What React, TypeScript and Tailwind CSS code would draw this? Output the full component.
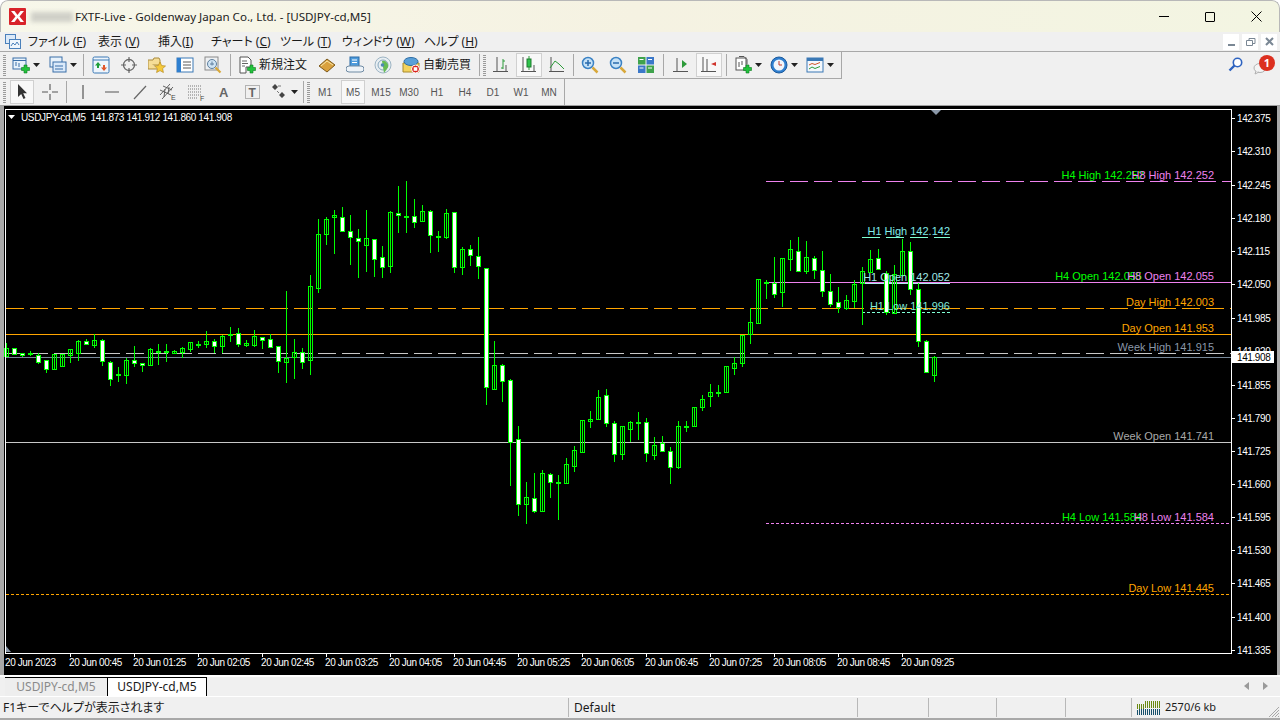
import React from 'react'

type Candle = [number, number, number, number, 0 | 1] // high, low, body top, body bottom, 1 = white body

const candles: Candle[] = [
  [343, 357, 348, 356, 0], [348, 354, 348, 354, 1], [353, 357, 353, 355, 1], [351, 356, 353, 354, 0],
  [353, 364, 355, 362, 1], [360, 373, 360, 369, 1], [354, 369, 354, 369, 0], [354, 366, 354, 366, 0],
  [349, 363, 349, 355, 0], [340, 361, 341, 353, 0], [339, 345, 341, 344, 1], [334, 348, 340, 345, 0],
  [339, 366, 340, 361, 1], [361, 386, 362, 379, 1], [367, 382, 374, 375, 0], [358, 384, 360, 375, 0],
  [346, 367, 360, 363, 1], [363, 372, 363, 365, 1], [348, 365, 349, 365, 0], [344, 365, 351, 352, 0],
  [344, 362, 351, 352, 0], [350, 354, 351, 353, 0], [347, 358, 348, 352, 0], [342, 352, 342, 349, 0],
  [341, 348, 344, 345, 0], [331, 348, 341, 344, 0], [339, 353, 341, 346, 1], [335, 353, 336, 346, 0],
  [327, 342, 334, 335, 0], [328, 347, 333, 344, 1], [340, 347, 343, 345, 0], [330, 347, 336, 345, 0],
  [337, 349, 337, 340, 1], [334, 347, 339, 347, 1], [346, 373, 346, 361, 1], [291, 383, 358, 362, 0],
  [339, 379, 352, 357, 0], [348, 369, 352, 362, 1], [275, 375, 286, 360, 0], [219, 293, 234, 288, 0],
  [217, 245, 219, 234, 0], [210, 254, 215, 217, 0], [207, 231, 217, 231, 1], [215, 265, 231, 237, 1],
  [229, 278, 238, 241, 1], [210, 272, 238, 245, 0], [239, 277, 239, 259, 1], [246, 278, 257, 267, 1],
  [211, 273, 212, 266, 0], [186, 233, 213, 215, 1], [181, 233, 216, 217, 0], [199, 228, 216, 222, 1],
  [205, 222, 211, 221, 0], [210, 253, 211, 235, 1], [231, 252, 236, 237, 0], [209, 239, 213, 237, 0],
  [212, 273, 212, 267, 1], [247, 275, 249, 267, 0], [245, 266, 249, 255, 1], [237, 279, 256, 266, 1],
  [268, 405, 268, 387, 1], [341, 389, 365, 389, 0], [364, 402, 365, 381, 1], [379, 486, 380, 442, 1],
  [426, 516, 439, 504, 1], [482, 524, 497, 504, 0], [473, 513, 498, 511, 1], [470, 511, 473, 511, 0],
  [473, 498, 474, 482, 1], [475, 520, 482, 483, 0], [458, 483, 464, 483, 0], [446, 472, 450, 466, 0],
  [420, 452, 420, 452, 0], [411, 428, 419, 421, 0], [390, 419, 397, 419, 0], [389, 427, 395, 423, 1],
  [421, 462, 423, 454, 1], [426, 460, 426, 454, 0], [421, 442, 422, 429, 0], [412, 440, 422, 423, 0],
  [418, 462, 422, 453, 1], [437, 460, 445, 455, 0], [436, 451, 443, 451, 1], [447, 484, 451, 467, 1],
  [421, 469, 426, 467, 0], [421, 432, 426, 427, 0], [407, 427, 407, 426, 0], [395, 411, 399, 407, 0],
  [384, 407, 392, 396, 0], [385, 397, 392, 393, 0], [366, 393, 366, 392, 0], [357, 375, 363, 368, 0],
  [335, 367, 335, 363, 0], [308, 344, 322, 334, 0], [279, 323, 279, 323, 0], [280, 299, 282, 283, 0],
  [257, 298, 283, 294, 1], [258, 307, 258, 292, 0], [240, 271, 249, 259, 0], [237, 271, 251, 271, 1],
  [241, 274, 257, 271, 0], [256, 279, 258, 270, 1], [251, 297, 270, 291, 1], [274, 307, 291, 304, 1],
  [287, 313, 302, 307, 1], [295, 310, 300, 308, 0], [280, 308, 284, 301, 0], [267, 325, 271, 283, 0],
  [250, 272, 259, 272, 0], [249, 269, 258, 269, 1], [271, 315, 273, 312, 1], [265, 313, 274, 313, 0],
  [239, 275, 251, 275, 0], [242, 295, 251, 289, 1], [283, 347, 289, 341, 1], [340, 372, 341, 372, 1],
  [356, 382, 357, 375, 0],
]

const prices = [
  ['142.375', 118], ['142.310', 151], ['142.245', 185], ['142.180', 218], ['142.115', 251], ['142.050', 284],
  ['141.985', 318], ['141.920', 351], ['141.855', 385], ['141.790', 418], ['141.725', 451], ['141.660', 484],
  ['141.595', 517], ['141.530', 550], ['141.465', 583], ['141.400', 617], ['141.335', 650],
] as const

const times = ['20 Jun 00:45', '20 Jun 01:25', '20 Jun 02:05', '20 Jun 02:45', '20 Jun 03:25', '20 Jun 04:05', '20 Jun 04:45',
  '20 Jun 05:25', '20 Jun 06:05', '20 Jun 06:45', '20 Jun 07:25', '20 Jun 08:05', '20 Jun 08:45', '20 Jun 09:25']

const labels: [string, number, number, string][] = [
  ['H4 High 142.252', 1144, 179, '#00ff00'],
  ['H8 High 142.252', 1214, 179, '#ee82ee'],
  ['H1 High 142.142', 950, 235, '#80e8e8'],
  ['H4 Open 142.055', 1142, 280, '#00ff00'],
  ['H8 Open 142.055', 1214, 280, '#ee82ee'],
  ['H1 Open 142.052', 950, 281, '#a0e8e8'],
  ['Day High 142.003', 1214, 306, '#ffa500'],
  ['H1 Low 141.996', 950, 310, '#80e8d8'],
  ['Day Open 141.953', 1214, 332, '#ffa500'],
  ['Week High 141.915', 1214, 351, '#8a97a8'],
  ['Week Open 141.741', 1214, 440, '#a9a9a9'],
  ['H4 Low 141.584', 1142, 521, '#00ff00'],
  ['H8 Low 141.584', 1214, 521, '#ee82ee'],
  ['Day Low 141.445', 1214, 592, '#ffa500'],
]

function Chart() {
  return (
    <svg viewBox="4 106 1273 569" className="block w-[1273px] h-[569px] bg-black font-['Liberation_Sans',sans-serif]">
      {/* levels go under the bars */}
      <g shapeRendering="crispEdges" strokeWidth="1" fill="none">
        <path d="M6 308.500H1231" stroke="#ffa500" strokeDasharray="18 6" />
        <path d="M6 334.500H1231" stroke="#ffa500" />
        <path d="M6 353.500H1231" stroke="#c8c8c8" strokeDasharray="18 6" />
        <path d="M6 357.500H1231" stroke="#778899" />
        <path d="M6 442.500H1231" stroke="#c8c8c8" />
        <path d="M6 594.500H1231" stroke="#ffa500" strokeDasharray="3 2" />
        <path d="M766 181.500H1231" stroke="#ee82ee" strokeDasharray="18 6" />
        <path d="M766 282.500H1231" stroke="#ee82ee" />
        <path d="M766 523.500H1231" stroke="#ee82ee" strokeDasharray="3 2" />
        <path d="M862 237.500H950" stroke="#7fffd4" strokeDasharray="18 6" />
        <path d="M860 283.500H950" stroke="#afeeee" />
        <path d="M862 312.500H950" stroke="#7fffd4" strokeDasharray="3 2" />
      </g>
      <g shapeRendering="crispEdges" stroke="#00ff00" strokeWidth="1">
        {candles.map(([high, low, top, bot, white], i) => {
          const x = 6 + i * 8
          return (
            <g key={i}>
              <path d={`M${x + 0.5} ${high}V${low}`} />
              <rect x={x - 1.5} y={top + 0.5} width={4} height={Math.max(bot - top, 1)} fill={white ? '#ffffff' : 'none'} />
            </g>
          )
        })}
      </g>
      <g fontSize="11" textAnchor="end">
        {labels.map(([text, x, y, color]) => (
          <text key={text} x={x} y={y} fill={color}>{text}</text>
        ))}
      </g>
      {/* frame + axes */}
      <path d="M5.500 109V653.500H1231.500V109.500H5.500" fill="none" stroke="#ffffff" shapeRendering="crispEdges" />
      <path d="M931 110h10l-5 5z" fill="#8a97a8" />
      <path d="M6 646l5 6H6z" fill="#8a97a8" />
      <path d="M8 115h7l-3.500 4z" fill="#ffffff" />
      <text x="21" y="121" fontSize="10" letterSpacing="-0.37" fill="#ffffff" xmlSpace="preserve">USDJPY-cd,M5  141.873 141.912 141.860 141.908</text>
      <g fontSize="10" letterSpacing="-0.4" fill="#ffffff">
        {prices.map(([p, y]) => (
          <g key={p}>
            <path d={`M1232 ${y + 0.5}h3`} stroke="#ffffff" shapeRendering="crispEdges" />
            <text x="1237" y={y + 4}>{p}</text>
          </g>
        ))}
        <text x="5" y="666">20 Jun 2023</text>
        {times.map((t, i) => (
          <g key={t}>
            <path d={`M${70.5 + i * 64} 654v3`} stroke="#ffffff" shapeRendering="crispEdges" />
            <text x={69 + i * 64} y="666">{t}</text>
          </g>
        ))}
        <rect x="1232" y="351" width="42" height="12" fill="#ffffff" />
        <text x="1237" y="361" fill="#000000">141.908</text>
      </g>
    </svg>
  )
}

const Caret = () => <svg width="7" height="4" viewBox="0 0 7 4" className="ml-[3px] shrink-0"><path d="M0 0h7L3.500 4z" fill="#222" /></svg>
const Grip = () => <div className="w-[3px] h-[21px] shrink-0 bg-[repeating-linear-gradient(to_bottom,#9a9a9a_0,#9a9a9a_1px,#f0f0f0_1px,#f0f0f0_2px)]" />
const Sep = ({ className = 'mx-[3px]' }: { className?: string }) => <div className={`w-px h-[22px] shrink-0 bg-[#a8a8a8] ${className}`} />

function Ico({ children }: { children: React.ReactNode }) {
  return <svg width="18" height="18" viewBox="0 0 18 18" className="shrink-0" shapeRendering="geometricPrecision">{children}</svg>
}

const Plus = () => <path d="M9.500 11.500h2.500V9h3v2.500h2.500v3H15V17h-3v-2.500H9.500z" fill="#22c33c" stroke="#0f7a22" strokeWidth=".6" />

const icons: Record<string, React.ReactNode> = {
  newChart: <><rect x="1" y="2" width="13" height="11" fill="#e8f2fb" stroke="#3a6fa8" /><path d="M1 4.500h13" stroke="#3a6fa8" /><path d="M4 10V6M7 11V7" stroke="#3a6fa8" /><Plus /></>,
  profiles: <><rect x="1" y="1" width="12" height="10" fill="#e8f2fb" stroke="#3a6fa8" /><rect x="4" y="6" width="13" height="10" fill="#dbeafa" stroke="#3a6fa8" /><path d="M6 10h8M6 13h8" stroke="#3a6fa8" /></>,
  market: <><rect x="1" y="1" width="16" height="16" rx="1.500" fill="#eef5fc" stroke="#3a78b5" /><path d="M1 4h16" stroke="#3a78b5" /><path d="M6 6l3 3.500H7V12H5V9.500H3z" fill="#1e9e3a" /><path d="M12 15l-3-3.500h2V9h2v2.500h2z" fill="#e0562a" /></>,
  target: <><circle cx="9" cy="9" r="5.500" fill="none" stroke="#666" strokeWidth="1.300" /><path d="M9 1v5M9 12v5M1 9h5M12 9h5" stroke="#666" strokeWidth="1.200" /></>,
  favorites: <><path d="M0 4h5l1-2h5l1 2v5H0z" fill="#f5dd96" stroke="#a98a3c" /><path d="M0 4v9h9" fill="#f5dd96" stroke="#a98a3c" /><path d="M12 6l1.700 3.600 3.800.4-2.900 2.600.8 3.900L12 14.600 8.600 16.500l.8-3.900L6.500 10l3.800-.4z" fill="#f5c93a" stroke="#b68b1e" strokeWidth=".7" /></>,
  navigator: <><rect x="1" y="2" width="16" height="14" fill="#fff" stroke="#3a78b5" /><rect x="1" y="2" width="4" height="14" fill="#2e7fd0" /><path d="M7 6h8M7 9h8M7 12h8" stroke="#5a5a5a" /></>,
  terminal: <><rect x="1" y="1" width="13" height="13" fill="#eef0f2" stroke="#8a8a8a" /><circle cx="8" cy="8" r="4.500" fill="#cfe4f5" stroke="#5e7f9e" /><path d="M11.500 11.500l5 5" stroke="#d8a83a" strokeWidth="2.200" /><path d="M6 8h4M8 5.500v4" stroke="#5e7f9e" /></>,
  order: <><path d="M2 1h8l3 3v7H8v6H2z" fill="#fff" stroke="#555" /><path d="M4 5h5M4 7.500h6M4 10h3" stroke="#666" /><Plus /></>,
  book: <><path d="M1 10l8-7 8 6-8 7z" fill="#d9a13e" stroke="#7d5a1c" /><path d="M3 10l6-5 6 4" fill="none" stroke="#f9e7a8" /></>,
  cloud: <><rect x="4" y="1" width="9" height="10" fill="#4e9bdc" stroke="#2a6aa6" /><path d="M6 4h5M6 6.500h5" stroke="#fff" /><path d="M3 16a3 3 0 0 1 0-6h12a3 3 0 0 1 0 6z" fill="#eef3f8" stroke="#6f8aa3" /></>,
  signal: <><circle cx="9" cy="9" r="8" fill="#e8eef2" stroke="#9db4c4" /><circle cx="9" cy="9" r="5" fill="none" stroke="#86a7bd" /><path d="M8 5a5 5 0 0 1 5 8l-3 4z" fill="#66bb55" /><circle cx="8.500" cy="9" r="1.800" fill="#4e88b5" /></>,
  auto: <><path d="M1 7h16v9H1z" fill="#f3d35e" stroke="#a88a2c" /><ellipse cx="9" cy="5.500" rx="7" ry="4" fill="#5aa0d8" stroke="#2f6ea5" /><circle cx="13.500" cy="13" r="4" fill="#d9251d" stroke="#fff" /><rect x="11.700" y="11.200" width="3.600" height="3.600" fill="#fff" /></>,
  bars: <><path d="M5 1v14M1 15.500h15" stroke="#555" fill="none" /><path d="M11 3v10M9 12h2M11 5h2" stroke="#2d9b3a" fill="none" /><path d="M14 9v6" stroke="#555" fill="none" /></>,
  candle: <><path d="M3 1v14M1 15.500h15" stroke="#555" fill="none" /><path d="M9 0v14" stroke="#2d9b3a" /><rect x="7" y="3" width="4" height="8" fill="#2ec44a" stroke="#1d7a2e" /><path d="M14 9v6" stroke="#555" /></>,
  line: <><path d="M3 1v14M1 15.500h15" stroke="#555" fill="none" /><path d="M2 12l5-7 4 3 5 5" stroke="#2d9b3a" fill="none" /></>,
  zoomIn: <><circle cx="7" cy="7" r="5.500" fill="#c6e2f7" stroke="#3b82c4" strokeWidth="1.500" /><path d="M4 7h6M7 4v6" stroke="#2a6bad" strokeWidth="1.500" /><path d="M11.500 11.500l5 5" stroke="#d8a83a" strokeWidth="2.500" /></>,
  zoomOut: <><circle cx="7" cy="7" r="5.500" fill="#c6e2f7" stroke="#3b82c4" strokeWidth="1.500" /><path d="M4 7h6" stroke="#2a6bad" strokeWidth="1.500" /><path d="M11.500 11.500l5 5" stroke="#d8a83a" strokeWidth="2.500" /></>,
  tile: <><rect x="1" y="1" width="7.500" height="7.500" fill="#3fa34d" /><rect x="9.500" y="1" width="7.500" height="7.500" fill="#3b78c9" /><rect x="1" y="9.500" width="7.500" height="7.500" fill="#3b78c9" /><rect x="9.500" y="9.500" width="7.500" height="7.500" fill="#3fa34d" /><path d="M2.500 3.500h4M11 3.500h4M2.500 12h4M11 12h4" stroke="#fff" /></>,
  shift: <><path d="M5 2v13M1 15.500h15" stroke="#555" fill="none" /><path d="M10 4l5 4-5 4z" fill="#2d9b3a" /></>,
  scroll: <><path d="M3 1v14M7 3v12M1 15.500h15" stroke="#555" fill="none" /><path d="M16 6v4l-5-2z" fill="#d0342c" /></>,
  indicator: <><rect x="2" y="2" width="10" height="12" fill="#fff" stroke="#555" /><path d="M5 .500h5l3 3v5" fill="none" stroke="#555" /><path d="M5 6v5M8 5v4" stroke="#555" /><Plus /></>,
  clock: <><circle cx="9" cy="9" r="8" fill="#2f7fd0" stroke="#1c5a9c" /><circle cx="9" cy="9" r="5.500" fill="#f1f6fb" /><path d="M9 5v4h3" stroke="#c0392b" fill="none" /></>,
  template: <><rect x="1" y="2" width="16" height="14" fill="#f4f8fc" stroke="#3a78b5" /><rect x="1" y="2" width="16" height="3" fill="#3a78b5" /><path d="M3 9l3-1.500 3 1 5-2" stroke="#d0562a" fill="none" /><path d="M3 13l3-2 3 1.500 5-2" stroke="#2d9b3a" fill="none" /></>,
  cursor: <path d="M5 1v13l3.200-3 2.300 5 2-1-2.300-4.800H14z" fill="#333" />,
  cross: <path d="M9 1v6M9 11v6M1 9h6M11 9h6" stroke="#555" strokeWidth="1.100" />,
  vline: <path d="M9 2v14" stroke="#555" strokeWidth="1.200" />,
  hline: <path d="M2 9h14" stroke="#555" strokeWidth="1.200" />,
  trend: <path d="M3 16L15 3" stroke="#666" strokeWidth="1.200" />,
  channel: <><path d="M1 12L11 1M3 16L14 4M1 7l11 5M4 3l9 4M5 14l1-8M9 11l1-7" stroke="#555" strokeWidth=".9" fill="none" /><text x="12" y="17" fontSize="7" fill="#444" fontFamily="Liberation Sans">E</text></>,
  fibo: <><path d="M1 3h13M1 6h13M1 9h13M1 12h13M1 15h10" stroke="#777" strokeDasharray="1 1" /><text x="13" y="18" fontSize="7" fill="#444" fontFamily="Liberation Sans">F</text></>,
  textA: <text x="4" y="14" fontSize="13" fill="#666" fontFamily="Liberation Sans" fontWeight="700">A</text>,
  textT: <><rect x="1.500" y="2.500" width="14" height="13" fill="none" stroke="#777" strokeDasharray="1 1" /><text x="4.500" y="14" fontSize="12" fill="#666" fontFamily="Liberation Sans" fontWeight="700">T</text></>,
  arrows: <><path d="M2 4l3-3 3 3-3 3zM9 12l3-3 3 3-3 3z" fill="#444" /><path d="M8 3h3M7 8l2 2" stroke="#777" /></>,
}

function Btn({ name, active, className = 'w-[28px]', children }: { name: string; active?: boolean; className?: string; children?: React.ReactNode }) {
  return (
    <div className={`h-[24px] flex items-center justify-center shrink-0 ${className} ${active ? 'bg-[#f8f8f8] border border-[#d0d0d0]' : ''}`}>
      <Ico>{icons[name]}</Ico>
      {children}
    </div>
  )
}

const menu: [string, string, string][] = [
  ['ファイル (', 'F', ')'], ['表示 (', 'V', ')'], ['挿入(', 'I', ')'], ['チャート (', 'C', ')'], ['ツール (', 'T', ')'], ['ウィンドウ (', 'W', ')'], ['ヘルプ (', 'H', ')'],
]

const menuGaps = ['w-[70px]', 'w-[60px]', 'w-[53px]', 'w-[69px]', 'w-[62px]', 'w-[82px]', 'w-[60px]']

const periods = ['M1', 'M5', 'M15', 'M30', 'H1', 'H4', 'D1', 'W1', 'MN']

export default function App() {
  return (
    <div className="w-[1280px] h-[720px] flex flex-col overflow-hidden bg-[#f0f0f0] rounded-t-lg text-[#1a1a1a] font-['Noto_Sans','Noto_Sans_CJK_JP',sans-serif]">
      {/* title bar */}
      <div className="h-[32px] shrink-0 flex items-center bg-gradient-to-r from-[#f7f7ea] via-[#f5f2e2] to-[#f3f5e2] border-t border-x border-[#b8b8b8] rounded-t-lg pl-[8px]">
        <svg width="17" height="17" viewBox="0 0 17 17" className="shrink-0">
          <rect width="17" height="17" rx="1" fill="#d8232a" />
          <path d="M2 3h3.500l3 4 3-4H15l-4.500 5.500L15 14h-3.500l-3-4-3 4H2l4.500-5.500z" fill="#fff" />
        </svg>
        <div className="w-[42px] h-[10px] ml-[5px] bg-[#d0d0c8] blur-[2px]" />
        <span className="ml-[2px] text-[11.6px] text-[#222] whitespace-nowrap">FXTF-Live - Goldenway Japan Co., Ltd. - [USDJPY-cd,M5]</span>
        <div className="ml-auto flex items-center">
          <div className="w-[46px] h-[31px] flex items-center justify-center"><div className="w-[10px] h-px bg-black" /></div>
          <div className="w-[46px] h-[31px] flex items-center justify-center"><div className="w-[10px] h-[10px] border border-black rounded-[1px]" /></div>
          <div className="w-[46px] h-[31px] flex items-center justify-center">
            <svg width="11" height="11" viewBox="0 0 11 11"><path d="M.5.500l10 10M10.500.500l-10 10" stroke="#000" /></svg>
          </div>
        </div>
      </div>

      {/* menu */}
      <div className="h-[20px] shrink-0 flex items-center border-b border-[#a8a8a8] text-[12px] [font-feature-settings:'palt'] relative">
        <svg width="16" height="16" viewBox="0 0 16 16" className="ml-[5px] mr-[7px] shrink-0">
          <rect x=".5" y=".5" width="10" height="9" fill="#dbe9f8" stroke="#4a80bb" />
          <rect x="4.500" y="5.500" width="11" height="9" fill="#eef5fc" stroke="#4a80bb" />
          <path d="M6 12l2-3 2 2 2-3 2 3" stroke="#4a80bb" fill="none" />
        </svg>
        {menu.map(([a, u, b], i) => (
          <div key={u} className={`shrink-0 whitespace-nowrap ${menuGaps[i]}`}>{a}<span className="underline">{u}</span>{b}</div>
        ))}
        <div className="ml-auto mr-[3px] flex gap-[3px]">
          {[
            <path key="a" d="M4 11h7" stroke="#7a8794" strokeWidth="2" />,
            <path key="b" d="M3.500 6.500h6v5h-6zM6 6.500v-2h6v5h-2" stroke="#7a8794" fill="none" />,
            <path key="c" d="M4 4l7 7M11 4l-7 7" stroke="#7a8794" strokeWidth="2" />,
          ].map((g) => (
            <div key={g.key} className="w-[16px] h-[16px] bg-white flex items-center justify-center">
              <svg width="15" height="15" viewBox="0 0 15 15">{g}</svg>
            </div>
          ))}
        </div>
      </div>

      {/* toolbar 1 */}
      <div className="h-[27px] shrink-0 flex items-center relative">
        <div className="h-[27px] flex items-center pl-[3px] border-b border-r border-[#a8a8a8] w-[842px] shrink-0">
          <Grip />
          <Btn name="newChart" className="w-[30px] ml-[5px]"><Caret /></Btn>
          <Btn name="profiles" className="w-[30px] ml-[7px]"><Caret /></Btn>
          <div className="w-[2px]" /><Sep />
          <Btn name="market" /><Btn name="target" /><Btn name="favorites" /><Btn name="navigator" /><Btn name="terminal" />
          <Sep />
          <Btn name="order" className="w-[79px] justify-start pl-[4px]"><span className="ml-[3px] text-[12px] whitespace-nowrap">新規注文</span></Btn>
          <Btn name="book" /><Btn name="cloud" /><Btn name="signal" />
          <Btn name="auto" className="w-[79px] justify-start pl-[5px]"><span className="ml-[3px] text-[12px] whitespace-nowrap">自動売買</span></Btn>
          <Sep />
          <Grip />
          <Btn name="bars" className="w-[29px]" /><Btn name="candle" active className="w-[26px] mx-[1px]" /><Btn name="line" />
          <Sep className="mx-[2px]" />
          <Btn name="zoomIn" /><Btn name="zoomOut" /><Btn name="tile" />
          <Sep />
          <Btn name="shift" /><Btn name="scroll" active className="w-[26px] mx-[1px]" />
          <Sep />
          <Btn name="indicator" className="w-[36px]"><Caret /></Btn>
          <Btn name="clock" className="w-[36px]"><Caret /></Btn>
          <Btn name="template" className="w-[36px]"><Caret /></Btn>
        </div>
        <div className="ml-auto mr-[5px] flex items-center gap-[10px] pb-[2px]">
          <svg width="15" height="15" viewBox="0 0 15 15"><circle cx="9.500" cy="5.500" r="4.200" fill="#fff" stroke="#2e63c0" strokeWidth="1.600" /><path d="M6.500 8.500L1.500 13.500" stroke="#2e63c0" strokeWidth="2.400" /></svg>
          <div className="relative w-[22px] h-[20px]">
            <svg width="14" height="12" viewBox="0 0 14 12" className="absolute left-0 bottom-0"><ellipse cx="7" cy="5" rx="6" ry="4.500" fill="#f4f4f4" stroke="#b0b0b0" /><path d="M3 8l-1 3 4-2" fill="#f4f4f4" stroke="#b0b0b0" /></svg>
            <div className="absolute right-0 top-0 w-[16px] h-[16px] rounded-full bg-[#dc3020] text-white text-[11px] font-bold leading-[16px] text-center">1</div>
          </div>
        </div>
      </div>

      {/* toolbar 2 */}
      <div className="h-[27px] shrink-0 flex items-center pl-[3px] border-b border-[#a0a0a0]">
        <Grip />
        <Btn name="cursor" active className="w-[24px] ml-[4px]" />
        <Btn name="cross" className="w-[28px] ml-[2px]" />
        <Sep className="mx-[2px]" />
        <Btn name="vline" /><Btn name="hline" className="w-[29px]" /><Btn name="trend" /><Btn name="channel" /><Btn name="fibo" /><Btn name="textA" /><Btn name="textT" className="w-[29px]" />
        <Btn name="arrows" className="w-[33px] pl-[1px]"><Caret /></Btn>
        <Sep />
        <Grip />
        <div className="flex gap-[4px] ml-[3px]">
          {periods.map((p) => (
            <div key={p} className={`w-[24px] h-[24px] flex items-center justify-center text-[10px] text-[#555] font-['Liberation_Sans',sans-serif] ${p === 'M5' ? 'bg-[#f8f8f8] border border-[#d0d0d0]' : ''}`}>{p}</div>
          ))}
        </div>
        <div className="ml-[3px] w-px h-[26px] bg-[#a8a8a8]" />
      </div>

      {/* chart */}
      <div className="h-[569px] shrink-0 flex pl-[4px] pr-[3px] bg-[#a8a8a8]">
        <Chart />
      </div>

      {/* tabs */}
      <div className="h-[21px] shrink-0 flex bg-[#f0f0f0] border-t-2 border-white pl-[5px] pr-[3px] items-start text-[12px]">
        <div className="w-[102px] h-[19px] leading-[18px] text-center text-[#8a8a8a] bg-[#eeeeee] border-t border-black">USDJPY-cd,M5</div>
        <div className="w-[100px] h-[20px] leading-[18px] text-center bg-white border-x border-b border-t border-black">USDJPY-cd,M5</div>
        <div className="ml-auto flex gap-[14px] items-center h-[18px] pr-[9px]">
          <svg width="5" height="8" viewBox="0 0 5 8"><path d="M5 0v8L0 4z" fill="#9a9a9a" /></svg>
          <svg width="5" height="8" viewBox="0 0 5 8"><path d="M0 0v8l5-4z" fill="#9a9a9a" /></svg>
        </div>
      </div>

      {/* status */}
      <div className="flex-1 flex items-center border-t border-white border-b-2 border-b-[#a8a8a8] text-[12px] relative">
        <div className="w-[568px] pl-[3px] pt-[1px] shrink-0 [font-feature-settings:'palt']">F1キーでヘルプが表示されます</div>
        <div className="w-[289px] h-[19px] pl-[5px] border-l border-[#b8b8b8] shrink-0 leading-[20px]">Default</div>
        <div className="w-[71px] h-[19px] border-l border-[#b8b8b8] shrink-0" />
        <div className="w-[68px] h-[19px] border-l border-[#b8b8b8] shrink-0" />
        <div className="w-[69px] h-[19px] border-l border-[#b8b8b8] shrink-0" />
        <div className="w-[66px] h-[19px] border-l border-[#b8b8b8] shrink-0" />
        <div className="h-[19px] border-l border-[#b8b8b8] pl-[5px] flex items-center gap-[4px]">
          <svg width="24" height="14" viewBox="0 0 24 14">
            {Array.from({ length: 12 }, (_, i) => (
              <g key={i}>
                <rect x={i * 2} y={i < 4 ? 3 : 0} width="1" height={i < 4 ? 5 : 7} fill="#6b8a12" />
                <rect x={i * 2} y={Math.max(9 - i, 8)} width="1" height={14 - Math.max(9 - i, 8)} fill="#17506b" />
              </g>
            ))}
          </svg>
          <span className="text-[11px]">2570/6 kb</span>
        </div>
        <svg width="12" height="12" viewBox="0 0 12 12" className="absolute right-0 bottom-0"><path d="M11 1L1 11M11 4L4 11M11 7L7 11M11 10L10 11" stroke="#a8a8a8" /></svg>
      </div>
    </div>
  )
}
